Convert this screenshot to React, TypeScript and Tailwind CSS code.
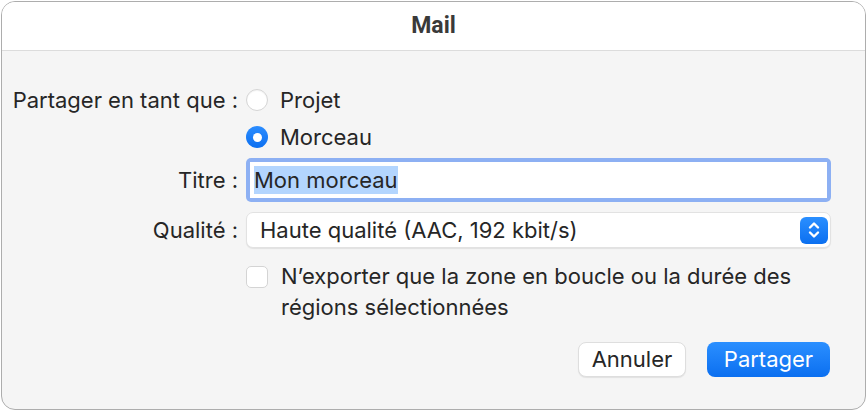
import React from 'react';

const font = { fontFamily: 'Inter, "Noto Sans", sans-serif' };

function Radio({ checked, label }: { checked?: boolean; label: string }) {
  return (
    <div className="flex h-[22px] items-center">
      {checked ? (
        <span className="flex h-[22px] w-[22px] shrink-0 items-center justify-center rounded-full bg-gradient-to-b from-[#2b8dff] to-[#0a6ff0]">
          <span className="h-[9px] w-[9px] rounded-full bg-white" />
        </span>
      ) : (
        <span className="h-[22px] w-[22px] shrink-0 rounded-full border border-[#d4d4d4] bg-white shadow-[inset_0_1px_1px_rgba(0,0,0,0.05)]" />
      )}
      <span className="ml-[12px] text-[22px] leading-[26px] text-[#262626]">{label}</span>
    </div>
  );
}

function Stepper() {
  return (
    <span className="flex h-[27px] w-[28px] items-center justify-center rounded-[6px] bg-gradient-to-b from-[#2a8fff] to-[#0a6ff0]">
      <svg width="14" height="20" viewBox="0 0 14 20" fill="none" stroke="white" strokeWidth="2.4" strokeLinecap="round" strokeLinejoin="round">
        <path d="M3 7.5 L7 3.5 L11 7.5" />
        <path d="M3 12.5 L7 16.5 L11 12.5" />
      </svg>
    </span>
  );
}

export default function App() {
  return (
    <div className="h-[412px] w-[867px] bg-white pl-[1px] pt-[1px]" style={font}>
      <div className="flex h-[409px] w-[865px] flex-col overflow-hidden rounded-[14px] border border-[#adadad] bg-[#f5f5f5]">
        {/* Title bar */}
        <div className="flex h-[49px] shrink-0 items-center justify-center border-b border-[#dcdcdc] bg-white">
          <span className="text-[23px] font-bold text-[#3a3a3a]" style={{ fontFamily: 'Roboto, sans-serif' }}>
            Mail
          </span>
        </div>

        {/* Form */}
        <div className="grid grid-cols-[236px_1fr] items-center gap-x-[8px] pr-[34px] text-[22px] leading-[26px] text-[#262626]">
          <div className="self-start pt-[36px] text-right">Partager en tant que :</div>
          <div className="flex flex-col gap-[15px] pt-[38px]">
            <Radio label="Projet" />
            <Radio checked label="Morceau" />
          </div>

          <div className="mt-[10px] text-right">Titre :</div>
          <div className="mt-[10px] rounded-[5px] bg-[#8db0f3] p-[4px]">
            <div className="flex h-[36px] items-center bg-white px-[4px]">
              <span className="bg-[#b3d5fe] leading-[28px]">Mon morceau</span>
            </div>
          </div>

          <div className="mt-[10px] text-right">Qualité :</div>
          <div className="mt-[10px] flex h-[36px] items-center justify-between rounded-[7px] border border-[#e2e2e2] bg-white pl-[13px] pr-[2px] shadow-[0_1px_1px_rgba(0,0,0,0.08)]">
            <span>Haute qualité (AAC, 192 kbit/s)</span>
            <Stepper />
          </div>

          <div />
          <div className="mt-[18px] flex items-start">
            <span className="h-[22px] w-[22px] shrink-0 rounded-[5px] border border-[#d4d4d4] bg-white" />
            <span className="-mt-[5px] ml-[13px] leading-[31px]">
              N’exporter que la zone en boucle ou la durée des
              <br />
              régions sélectionnées
            </span>
          </div>
        </div>

        {/* Buttons */}
        <div className="mt-[19px] flex justify-end gap-[21px] pr-[35px] text-[22px]">
          <button className="h-[35px] w-[108px] rounded-[8px] border border-[#dedede] bg-white text-[#262626] shadow-[0_1px_1px_rgba(0,0,0,0.08)]">
            Annuler
          </button>
          <button className="h-[35px] w-[123px] rounded-[8px] bg-gradient-to-b from-[#2a8fff] to-[#0a6ff0] text-white">
            Partager
          </button>
        </div>
      </div>
    </div>
  );
}
